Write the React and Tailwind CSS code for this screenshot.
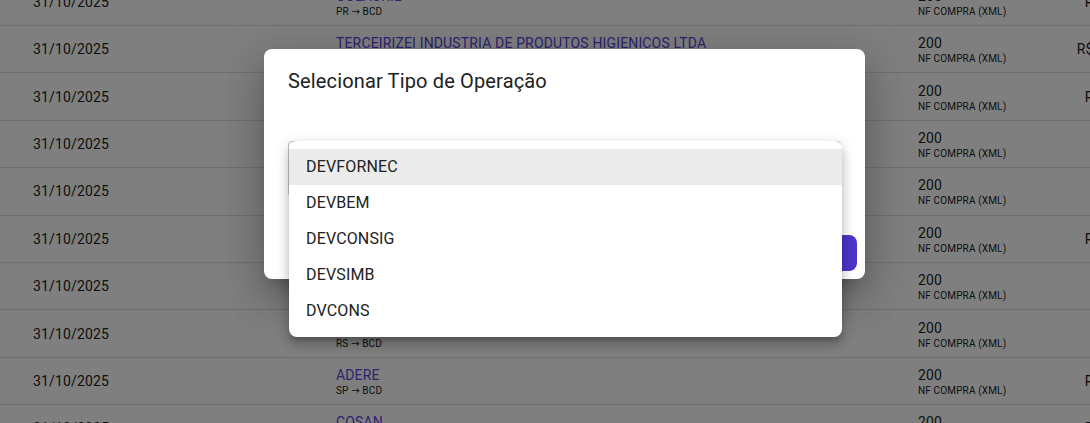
import React from "react";

const rows = [
  { name: "COLACRIL", from: "PR", value: "R$ 1.234,56" },
  { name: "TERCEIRIZEI INDUSTRIA DE PRODUTOS HIGIENICOS LTDA", from: "SP", value: "R$ 12.345,67" },
  { name: "INDUSTRIA QUIMICA LTDA", from: "SC", value: "R$ 2.450,00" },
  { name: "DISTRIBUIDORA NORTE", from: "PR", value: "" },
  { name: "EMBALAGENS SUL", from: "RS", value: "" },
  { name: "PLASTICOS BRASIL", from: "SP", value: "R$ 3.210,40" },
  { name: "QUIMICA FINA", from: "MG", value: "" },
  { name: "PAPELARIA GAUCHA", from: "RS", value: "" },
  { name: "ADERE", from: "SP", value: "R$ 4.120,33" },
  { name: "COSAN", from: "SP", value: "R$ 5.870,12" },
];

const options = ["DEVFORNEC", "DEVBEM", "DEVCONSIG", "DEVSIMB", "DVCONS"];

const App = () => {
  return (
    <div className="relative h-[423px] w-full overflow-hidden bg-white font-['Roboto',sans-serif] tracking-[0.15px] text-[#212121]">
      {/* tabela ao fundo */}
      <div className="-mt-[21.4px] w-[1200px]">
        {rows.map((row, i) => (
          <div
            key={i}
            className="flex h-[47.4px] items-center border-b border-[#e0e0e0] text-[14px]"
          >
            <div className="w-[336px] shrink-0 pl-[33px] leading-5">31/10/2025</div>
            <div className="w-[582px] shrink-0">
              <div className="leading-5 text-[#5a46e0]">{row.name}</div>
              <div className="text-[10px] leading-3">
                {row.from} <span className="font-['DejaVu_Sans',sans-serif]">→</span> BCD
              </div>
            </div>
            <div className="w-[152px] shrink-0">
              <div className="leading-5">200</div>
              <div className="text-[10px] leading-3">NF COMPRA (XML)</div>
            </div>
            <div className="w-[90px] shrink-0 text-right leading-5">{row.value}</div>
          </div>
        ))}
      </div>

      {/* fundo escuro */}
      <div className="absolute inset-0 bg-black/50" />

      {/* dialog */}
      <div className="absolute left-[264px] top-[49px] flex h-[230px] w-[601px] flex-col rounded-[8px] bg-white shadow-[0_11px_15px_-7px_rgba(0,0,0,0.2),0_24px_38px_3px_rgba(0,0,0,0.14),0_9px_46px_8px_rgba(0,0,0,0.12)]">
        <h2 className="px-6 py-4 text-[20px] leading-8 text-[#212121]">
          Selecionar Tipo de Operação
        </h2>
        <div className="flex-1 px-6 pt-7">
          <div className="flex h-[56px] items-center rounded-[4px] border border-[#c4c4c4] px-[14px] text-[16px]">
            DEVFORNEC
          </div>
        </div>
        <div className="flex items-center justify-end gap-2 p-2">
          <button className="h-9 rounded-[8px] px-4 text-[14px] font-medium uppercase text-[#4b36c9]">
            Cancelar
          </button>
          <button className="h-9 rounded-[8px] bg-[#4b36c9] px-4 text-[14px] font-medium uppercase text-white">
            Confirmar
          </button>
        </div>
      </div>

      {/* menu do select */}
      <ul className="absolute left-[289px] top-[141px] w-[553px] rounded-[8px] bg-white py-2 shadow-[0_5px_5px_-3px_rgba(0,0,0,0.2),0_8px_10px_1px_rgba(0,0,0,0.14),0_3px_14px_2px_rgba(0,0,0,0.12)]">
        {options.map((opt, i) => (
          <li
            key={opt}
            className={`flex h-9 items-center px-[17px] text-[16px] text-[#212121] ${
              i === 0 ? "bg-[#ebebeb]" : ""
            }`}
          >
            {opt}
          </li>
        ))}
      </ul>
    </div>
  );
};

export default App;
